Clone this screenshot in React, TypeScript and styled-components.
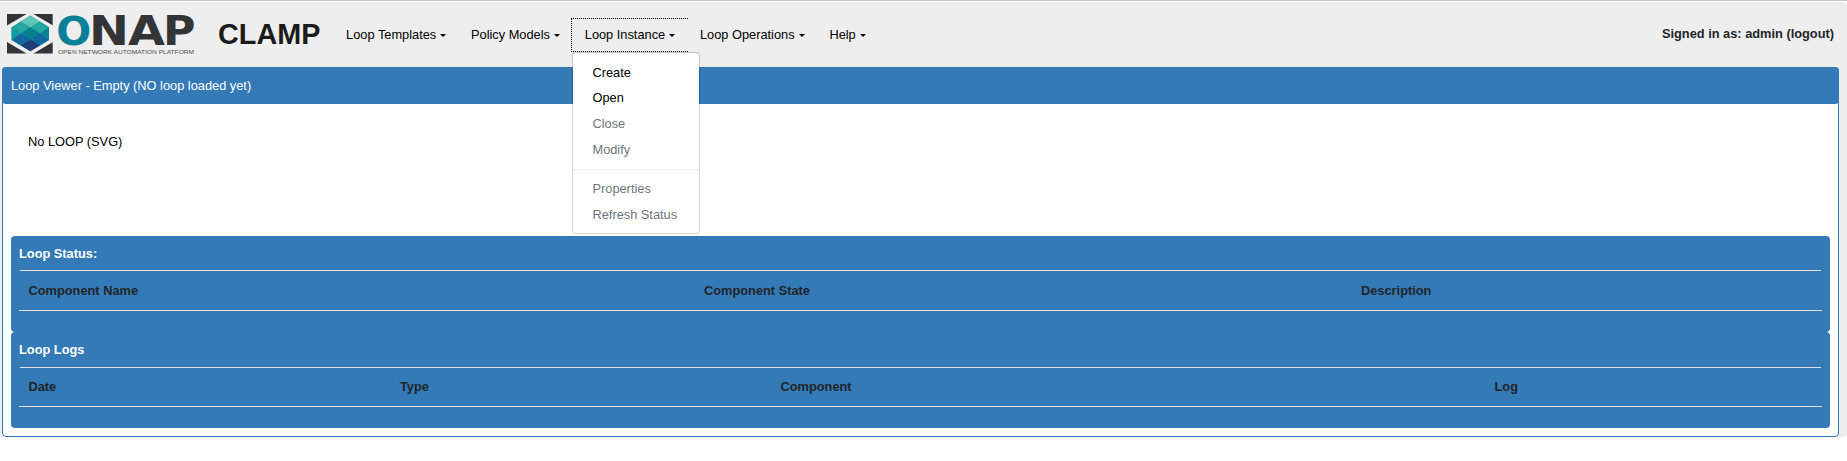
import React from 'react';
import styled, { createGlobalStyle } from 'styled-components';

const BLUE = '#337ab7';

const GlobalStyle = createGlobalStyle`
  *, *::before, *::after { box-sizing: border-box; }
  body {
    margin: 0;
    background: #fff;
    color: #212529;
    font-family: "Liberation Sans", Arial, sans-serif;
    font-size: 12.8px;
    line-height: 19.2px;
  }
`;

const Page = styled.div`
  border-top: 1px solid #c8c4c2;
  padding-top: 1px;
`;

const Shell = styled.div`
  height: 435px;
  padding: 0 8px 0 2px;
  background: #eee;
  border-radius: 0 4px 4px 0;
`;

const NavBar = styled.nav`
  display: flex;
  align-items: center;
  height: 65px;
  padding: 0 5px;
`;

const Logo = styled.svg`
  display: block;
  flex: none;
  width: 190px;
  height: 65px;
  overflow: visible;
`;

const Brand = styled.div`
  width: 102px;
  margin: -2px 0 0 21px;
  font-size: 28.8px;
  font-weight: bold;
  line-height: 36px;
  color: #1b1b1b;
`;

const Menus = styled.div`
  display: flex;
  margin-left: 13.3px;
  margin-top: 1px;
`;

const MenuItem = styled.div`
  position: relative;
`;

const MenuLink = styled.a<{ $open?: boolean }>`
  display: flex;
  align-items: center;
  height: 32px;
  padding: 0 12px 0 12.8px;
  color: #000;
  background: #eee;
  white-space: nowrap;
  outline: ${p => (p.$open ? '1px dotted #000' : 'none')};
`;

const Caret = styled.span`
  margin-left: 4px;
  border-top: 3px solid;
  border-left: 3px solid transparent;
  border-right: 3px solid transparent;
`;

const Dropdown = styled.div`
  position: absolute;
  z-index: 5;
  top: 100%;
  left: 0;
  width: 128px;
  margin-top: 1px;
  padding: 6.5px 0 5.5px;
  background: #fff;
  background-clip: padding-box;
  border: 1px solid rgba(0, 0, 0, 0.17);
  border-radius: 4px;
`;

const Option = styled.a<{ $disabled?: boolean }>`
  display: block;
  height: 25.8px;
  padding: 3.2px 19.5px;
  color: ${p => (p.$disabled ? '#6c757d' : '#000')};
`;

const Divider = styled.div`
  height: 1px;
  margin: 6px 0 6.2px;
  background: #e9ecef;
`;

const SignedIn = styled.div`
  margin-left: auto;
  margin-top: -1px;
  font-weight: bold;
`;

const Viewer = styled.main`
  height: 370px;
  border: 1px solid ${BLUE};
  border-radius: 4px;
  background: #fff;
`;

const ViewerTitle = styled.header`
  height: 37px;
  margin: -1px -1px 0;
  padding: 9px;
  color: #fff;
  background: ${BLUE};
  border-radius: 4px;
`;

const LoopArea = styled.section`
  height: 132px;
  padding: 28px 25px;
  color: #000;
`;

const Panels = styled.div`
  padding: 0 8px;
`;

const Panel = styled.section`
  height: 96px;
  padding: 8px;
  background: ${BLUE};
  border-radius: 4px;
`;

const PanelTitle = styled.h2<{ $height: number }>`
  margin: 0;
  height: ${p => p.$height}px;
  font-size: inherit;
  line-height: 20px;
  color: #fff;
`;

const Columns = styled.div<{ $template: string; $height: number }>`
  display: grid;
  grid-template-columns: ${p => p.$template};
  align-items: end;
  height: ${p => p.$height}px;
  padding-bottom: 10px;
  font-weight: bold;
  position: relative;
  border-bottom: 1px solid #e6e2e4;

  &::before {
    content: '';
    position: absolute;
    top: 0;
    left: 1.4px;
    right: 1.4px;
    height: 1px;
    background: #e6e2e4;
  }
`;

const HeadCell = styled.span`
  padding-left: 9.5px;
  line-height: 19px;
`;

type Entry = { label: string; disabled?: boolean } | null;

const loopInstance: Entry[] = [
  { label: 'Create' },
  { label: 'Open' },
  { label: 'Close', disabled: true },
  { label: 'Modify', disabled: true },
  null,
  { label: 'Properties', disabled: true },
  { label: 'Refresh Status', disabled: true },
];

const menus: { label: string; entries?: Entry[] }[] = [
  { label: 'Loop Templates' },
  { label: 'Policy Models' },
  { label: 'Loop Instance', entries: loopInstance },
  { label: 'Loop Operations' },
  { label: 'Help' },
];

const OnapLogo = () => (
  <Logo viewBox="7 2 190 65" role="img" aria-label="ONAP">
    <path d="M7 14H52.7V53.6H7Z" fill="#333436" />
    <path d="M30 12L53 25.5V42L30 55.5L7 42V25.5Z" fill="#eee" />
    <path d="M30.3 15.6L49 27.2V40L30.3 51.3L11.6 40V27.2Z" fill="#128f98" />
    <path d="M30.3 15.6L40 21.5L30.3 27.5L20.7 21.5Z" fill="#62c3bb" />
    <path d="M20.7 21.5L30.3 27.5L21 33.4L11.6 27.4ZM40 21.5L49 27.2L40 33.4L30.3 27.5Z" fill="#24a6a3" />
    <path d="M30.3 27.5L40 33.4L30.3 39.4L21 33.4Z" fill="#087f8d" />
    <path d="M11.6 27.4L21 33.4L11.6 39.8Z" fill="#159ba2" />
    <path d="M49 27.2V39.8L40 33.4Z" fill="#0b8495" />
    <path d="M21 33.4L30.3 39.4L20.8 45.6L11.6 40ZM40 33.4L49 40L40 45.6L30.3 39.4Z" fill="#1268a2" />
    <path d="M30.3 39.4L40 45.6L30.3 51.3L20.8 45.6Z" fill="#1e3d75" />
    <text y="44.6" fontFamily="'DejaVu Sans'" fontWeight="bold" fontSize="40.5" fill="#333436">
      <tspan x="56.3" fontSize="39.5" fill="#0a8199" textLength="35" lengthAdjust="spacingAndGlyphs">O</tspan>
      <tspan x="89" textLength="40" lengthAdjust="spacingAndGlyphs">N</tspan>
      <tspan x="128" textLength="37" lengthAdjust="spacingAndGlyphs">A</tspan>
      <tspan x="163" textLength="32.5" lengthAdjust="spacingAndGlyphs">P</tspan>
    </text>
    <text x="58" y="53.6" fontFamily="'Liberation Sans'" fontSize="6" fill="#4a4b4d" textLength="136" lengthAdjust="spacingAndGlyphs">
      OPEN NETWORK AUTOMATION PLATFORM
    </text>
  </Logo>
);

export default function App() {
  return (
    <>
      <GlobalStyle />
      <Page>
        <Shell>
          <NavBar>
            <OnapLogo />
            <Brand>CLAMP</Brand>
            <Menus>
              {menus.map(menu => (
                <MenuItem key={menu.label}>
                  <MenuLink $open={!!menu.entries}>
                    {menu.label}
                    <Caret />
                  </MenuLink>
                  {menu.entries && (
                    <Dropdown>
                      {menu.entries.map((entry, i) =>
                        entry ? (
                          <Option key={entry.label} $disabled={entry.disabled}>{entry.label}</Option>
                        ) : (
                          <Divider key={i} />
                        ),
                      )}
                    </Dropdown>
                  )}
                </MenuItem>
              ))}
            </Menus>
            <SignedIn>Signed in as: admin (logout)</SignedIn>
          </NavBar>
          <Viewer>
            <ViewerTitle>Loop Viewer - Empty (NO loop loaded yet)</ViewerTitle>
            <LoopArea>No LOOP (SVG)</LoopArea>
            <Panels>
              <Panel>
                <PanelTitle $height={26}>Loop Status:</PanelTitle>
                <Columns $template="675.5px 657px 1fr" $height={41}>
                  <HeadCell>Component Name</HeadCell>
                  <HeadCell>Component State</HeadCell>
                  <HeadCell>Description</HeadCell>
                </Columns>
              </Panel>
              <Panel>
                <PanelTitle $height={27}>Loop Logs</PanelTitle>
                <Columns $template="371.5px 380.5px 714px 1fr" $height={40}>
                  <HeadCell>Date</HeadCell>
                  <HeadCell>Type</HeadCell>
                  <HeadCell>Component</HeadCell>
                  <HeadCell>Log</HeadCell>
                </Columns>
              </Panel>
            </Panels>
          </Viewer>
        </Shell>
      </Page>
    </>
  );
}
